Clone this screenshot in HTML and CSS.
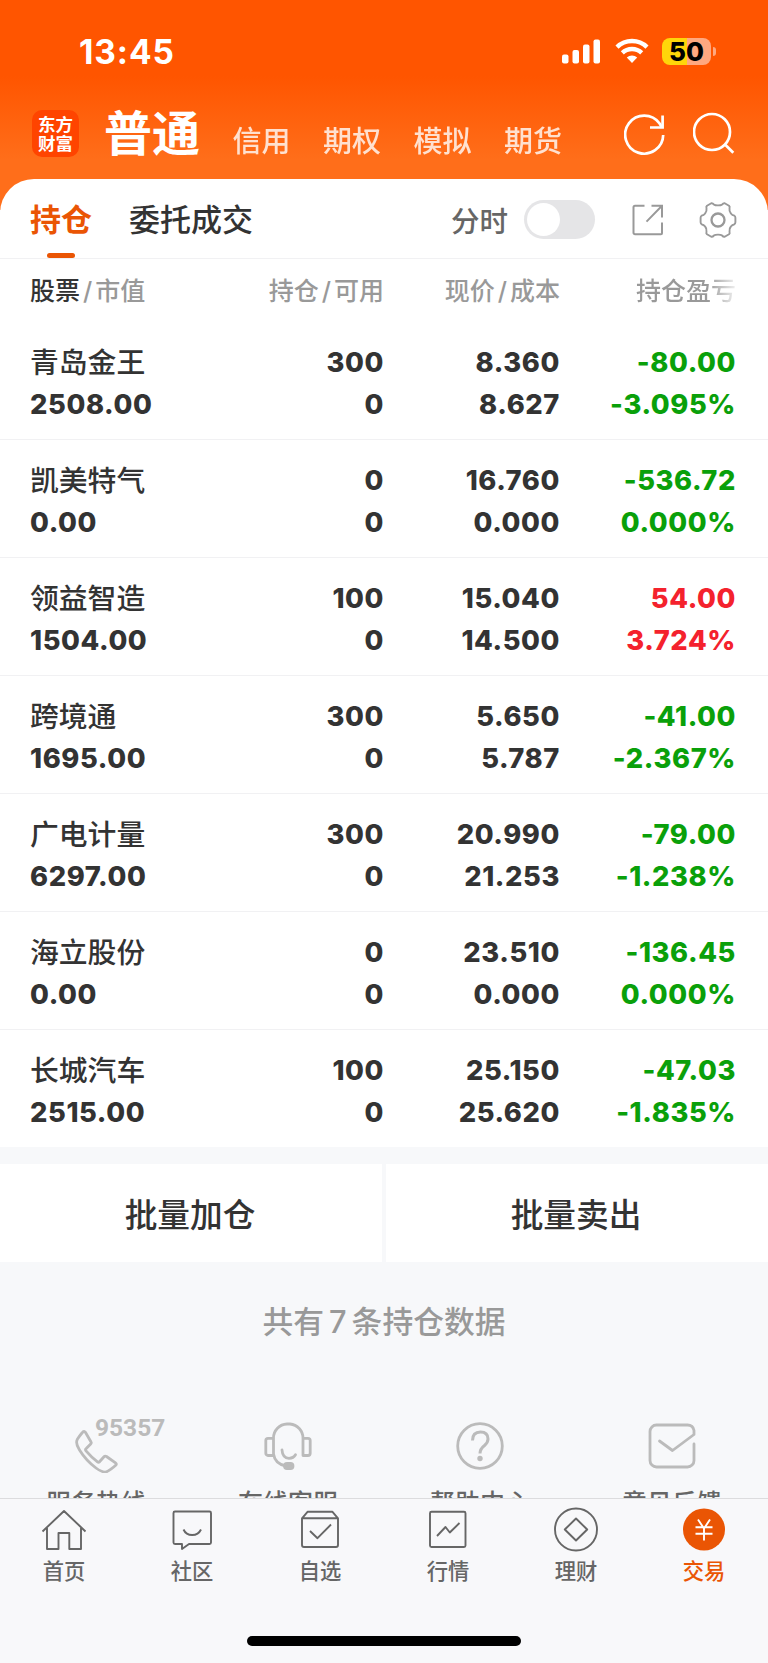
FILE: index.html
```html
<!DOCTYPE html>
<html lang="zh-CN">
<head>
    <meta charset="UTF-8">
    <meta name="viewport" content="width=device-width, initial-scale=1.0">
    <title>持仓</title>
    <link rel="stylesheet" href="styles.css">
</head>
<body>
    <div class="screen">
        <header class="header">
            <div class="status-bar">
                <span class="time">13:45</span>
                <div class="status-icons">
                    <svg class="signal" width="39" height="25" viewBox="0 0 39 25" fill="#fff">
                        <rect x="0" y="15.5" width="6.5" height="9" rx="2"/>
                        <rect x="10.5" y="11" width="6.5" height="13.5" rx="2"/>
                        <rect x="21" y="5.5" width="6.5" height="19" rx="2"/>
                        <rect x="31.5" y="0.5" width="6.5" height="24" rx="2"/>
                    </svg>
                    <svg class="wifi" width="34" height="26" viewBox="0 0 34 26" fill="none" stroke="#fff" stroke-width="4.4">
                        <path d="M2 9.1a21.5 21.5 0 0 1 30 0"/>
                        <path d="M7.3 14.9a14 14 0 0 1 19.4 0"/>
                        <path d="M17 25l-5.2-5.4a7.6 7.6 0 0 1 10.4 0z" fill="#fff" stroke="none"/>
                    </svg>
                    <div class="battery"><span>50</span></div>
                </div>
            </div>
            <nav class="accounts">
                <div class="logo"><span>东方</span><span>财富</span></div>
                <span class="account active">普通</span>
                <span class="account">信用</span>
                <span class="account">期权</span>
                <span class="account">模拟</span>
                <span class="account">期货</span>
                <svg class="refresh" width="42" height="42" viewBox="0 0 42 42" fill="none" stroke="#fff" stroke-width="2.7">
                    <path d="M39.2 21A19 19 0 1 1 35.6 9.5L38 13.5"/>
                    <path d="M38.6 1.5v12H26"/>
                </svg>
                <svg class="search" width="42" height="42" viewBox="0 0 42 42" fill="none" stroke="#fff" stroke-width="2.7">
                    <circle cx="19" cy="20" r="18"/>
                    <path d="M31.5 32l8.8 8.8"/>
                </svg>
            </nav>
        </header>

        <main class="panel">
            <div class="tabs">
                <span class="tab active">持仓</span>
                <span class="tab">委托成交</span>
                <span class="switch-label">分时</span>
                <span class="switch"></span>
                <svg class="share" width="32" height="32" viewBox="0 0 32 32" fill="none" stroke="#999" stroke-width="2">
                    <path d="M12.5 1.8H3a1.5 1.5 0 0 0-1.5 1.5v25.4A1.5 1.5 0 0 0 3 30.2h26a1 1 0 0 0 1-1V18.5"/>
                    <path d="M19.5 1.8H30v11.7M30 1.8L14.5 17.6"/>
                </svg>
                <svg class="gear" width="38" height="38" viewBox="0 0 38 38" fill="none" stroke="#999" stroke-width="1.9" stroke-linejoin="round">
                    <path d="M12.3 2.2q1.5-.2 2.500 1.200q1.200 1 4.200 1t4.200-1q1-1.400 2.500-1.200l4.300 2.500q1.100 1 .5 2.500q-.5 3.300 1.400 5.300q1.400 1.800 3.200 2q1.300.7 1.300 2.200v4.600q0 1.500-1.300 2.200q-1.800.2-3.200 2q-1.900 2-1.400 5.300q.6 1.500-.5 2.500l-4.300 2.500q-1.500.2-2.500-1.200q-1.200-1-4.200-1t-4.200 1q-1 1.400-2.500 1.200l-4.300-2.500q-1.100-1-.5-2.500q.5-3.300-1.400-5.300q-1.400-1.800-3.200-2q-1.300-.7-1.300-2.200v-4.600q0-1.500 1.300-2.200q1.800-.2 3.200-2q1.900-2 1.400-5.300q-.6-1.500.5-2.500z"/>
                    <circle cx="19" cy="19" r="6.5" stroke-width="2.3"/>
                </svg>
            </div>

            <div class="row table-head">
                <span><b>股票</b><i>/</i>市值</span>
                <span>持仓<i>/</i>可用</span>
                <span>现价<i>/</i>成本</span>
                <span class="fade">持仓盈亏</span>
            </div>

            <div class="row">
                <div class="name">青岛金王</div><div>300</div><div>8.360</div><div class="down">-80.00</div>
                <div>2508.00</div><div>0</div><div>8.627</div><div class="down">-3.095%</div>
            </div>
            <div class="row">
                <div class="name">凯美特气</div><div>0</div><div>16.760</div><div class="down">-536.72</div>
                <div>0.00</div><div>0</div><div>0.000</div><div class="down">0.000%</div>
            </div>
            <div class="row">
                <div class="name">领益智造</div><div>100</div><div>15.040</div><div class="up">54.00</div>
                <div>1504.00</div><div>0</div><div>14.500</div><div class="up">3.724%</div>
            </div>
            <div class="row">
                <div class="name">跨境通</div><div>300</div><div>5.650</div><div class="down">-41.00</div>
                <div>1695.00</div><div>0</div><div>5.787</div><div class="down">-2.367%</div>
            </div>
            <div class="row">
                <div class="name">广电计量</div><div>300</div><div>20.990</div><div class="down">-79.00</div>
                <div>6297.00</div><div>0</div><div>21.253</div><div class="down">-1.238%</div>
            </div>
            <div class="row">
                <div class="name">海立股份</div><div>0</div><div>23.510</div><div class="down">-136.45</div>
                <div>0.00</div><div>0</div><div>0.000</div><div class="down">0.000%</div>
            </div>
            <div class="row">
                <div class="name">长城汽车</div><div>100</div><div>25.150</div><div class="down">-47.03</div>
                <div>2515.00</div><div>0</div><div>25.620</div><div class="down">-1.835%</div>
            </div>
        </main>

        <div class="batch">
            <div class="batch-btn">批量加仓</div>
            <div class="batch-btn">批量卖出</div>
        </div>
        <p class="summary">共有<span>7</span>条持仓数据</p>

        <div class="services">
            <div class="service">
                <div class="hotline">
                    <svg width="44" height="44" viewBox="0 0 44 44" fill="none" stroke="#bbb" stroke-width="2.8" stroke-linejoin="round">
                        <path d="M9.5 2.5q-1.500 1-6 7.500q-2.500 4 2 11q6.500 10.500 16.500 18q6 4.500 10 4q4-1.500 10-7q.8-1.200-.5-2.200l-9-6.300q-1.500-.8-2.500.3l-4.500 5q-1 .8-2 0q-6-4.500-11.500-11q-1-1.200.2-2.300l4.500-4.500q1-1 .2-2.200l-5.500-9.500q-.9-1.300-1.900-.8z"/>
                    </svg>
                    <span>95357</span>
                </div>
                <div class="service-name">服务热线</div>
            </div>
            <div class="service">
                <svg width="48" height="48" viewBox="0 0 48 48" fill="none" stroke="#bbb" stroke-width="2.8" stroke-linejoin="round">
                    <path d="M9.5 32V16A14 14 0 0 1 23 2h3a14 14 0 0 1 13 14v17.5h5a2.2 2.2 0 0 0 2.2-2.2V18.5a2.2 2.2 0 0 0-2.2-2.2h-5"/>
                    <path d="M9.5 33.5H4a2.2 2.2 0 0 1-2.2-2.2V18.5A2.2 2.2 0 0 1 4 16.3h5.5M9.5 32q1.5 10 12.5 12"/>
                    <path d="M18 28q.5 8 7 8.3q4.5 0 6.5-3.5" stroke-linecap="round"/>
                    <rect x="20.5" y="41.5" width="8.5" height="5" rx="2.5" fill="#bbb"/>
                </svg>
                <div class="service-name">在线客服</div>
            </div>
            <div class="service">
                <svg width="48" height="48" viewBox="0 0 48 48" fill="none" stroke="#bbb" stroke-width="2.8">
                    <circle cx="24" cy="24" r="22.3"/>
                    <path d="M16.5 18.5q0-8.5 8-8.5q7.5 0 7.5 7q0 3.5-3.5 6.5q-4.5 3.5-4.5 8" stroke-width="3"/>
                    <circle cx="24" cy="36.5" r="2.7" fill="#bbb" stroke="none"/>
                </svg>
                <div class="service-name">帮助中心</div>
            </div>
            <div class="service">
                <svg width="48" height="48" viewBox="0 0 48 48" fill="none" stroke="#bbb" stroke-width="2.8" stroke-linecap="round" stroke-linejoin="round">
                    <path d="M46 22v16.5a6.5 6.5 0 0 1-6.5 6.5h-31A6.5 6.5 0 0 1 2 38.500v-29A6.500 6.500 0 0 1 8.500 3h31q5.500 0 6.500 5.500v4L24.500 28.500L11.500 19"/>
                </svg>
                <div class="service-name">意见反馈</div>
            </div>
        </div>

        <footer class="tabbar">
            <div class="tab-item">
                <svg width="46" height="46" viewBox="0 0 46 46" fill="none" stroke="#666" stroke-width="1.9" stroke-linejoin="round">
                    <path d="M1.5 24.5L23 4l21.5 20.5M6 21v21h11.5V26h10.8v16H40V21"/>
                </svg>
                <span>首页</span>
            </div>
            <div class="tab-item">
                <svg width="46" height="46" viewBox="0 0 46 46" fill="none" stroke="#666" stroke-width="1.9" stroke-linejoin="round">
                    <path d="M6 4.5h34.5a1.5 1.5 0 0 1 1.5 1.5v29.5a1.5 1.5 0 0 1-1.5 1.5H20l-7 5V37H6a1.5 1.5 0 0 1-1.5-1.5V6A1.5 1.5 0 0 1 6 4.5z"/>
                    <path d="M14.5 22.5q2.5 5.5 8.7 5.5t8.8-5.5"/>
                </svg>
                <span>社区</span>
            </div>
            <div class="tab-item">
                <svg width="46" height="46" viewBox="0 0 46 46" fill="none" stroke="#666" stroke-width="1.9" stroke-linejoin="round">
                    <path d="M5 11.3h36v26.7a2 2 0 0 1-2 2H7a2 2 0 0 1-2-2zM5 11.3l5.5-6.5h25L41 11.3"/>
                    <path d="M13 24l7.5 7.2L34 17.5"/>
                </svg>
                <span>自选</span>
            </div>
            <div class="tab-item">
                <svg width="46" height="46" viewBox="0 0 46 46" fill="none" stroke="#666" stroke-width="1.9" stroke-linejoin="round">
                    <rect x="5" y="4.8" width="35.5" height="35.2" rx="1.5"/>
                    <path d="M12 29l8.5-9l4.3 5.5l9.7-9.5"/>
                </svg>
                <span>行情</span>
            </div>
            <div class="tab-item">
                <svg width="46" height="46" viewBox="0 0 46 46" fill="none" stroke="#666" stroke-width="1.9" stroke-linejoin="round">
                    <circle cx="23" cy="22.5" r="21"/>
                    <path d="M23 11.5l11.2 11L23 33.5l-11.2-11z"/>
                </svg>
                <span>理财</span>
            </div>
            <div class="tab-item active">
                <svg width="46" height="46" viewBox="0 0 46 46" fill="none" stroke="#fff" stroke-width="1.9">
                    <circle cx="23" cy="22.5" r="21" fill="#ea5504" stroke="none"/>
                    <path d="M17 12.5l6 9l6-9M23 21.5v12M14.5 20.3h17M14.5 26.8h17"/>
                </svg>
                <span>交易</span>
            </div>
        </footer>
        <div class="home-indicator"></div>
    </div>
</body>
</html>
```
FILE: styles.css
```css
:root {
    --accent: #ea5504;
    --text: #333;
    --muted: #999;
    --page-bg: #f7f8fa;
    --line: #f1f1f3;
    --up: #f4222d;
    --down: #0aa00a;
}

* {
    box-sizing: border-box;
}

body {
    margin: 0;
    font-family: Inter, "Noto Sans CJK SC", sans-serif;
    color: var(--text);
    background-color: var(--page-bg);
}

svg {
    display: block;
    flex: none;
}

.screen {
    position: relative;
    width: 768px;
    height: 1663px;
    overflow: hidden;
    display: flex;
    flex-direction: column;
}

/* Header */
.header {
    flex: none;
    height: 210px;
    background: linear-gradient(#ff5500 0, #ff5500 76px, #ff6e1a 160px);
}

.status-bar {
    height: 102px;
    padding: 0 57px 0 79px;
    display: flex;
    justify-content: space-between;
    align-items: center;
}

.time {
    padding-top: 1px;
    color: #fff;
    font-size: 33.5px;
    font-weight: 700;
    letter-spacing: 0.9px;
}

.status-icons {
    display: flex;
    align-items: center;
}

.wifi {
    margin: 0 13px 0 14px;
}

.battery {
    position: relative;
    width: 49px;
    height: 27px;
    border-radius: 8px;
    background: linear-gradient(90deg, #ffd60a 51%, #ffa880 51%);
    color: #000;
    font-size: 26px;
    font-weight: 800;
    line-height: 27px;
    text-align: center;
}

.battery::after {
    content: "";
    position: absolute;
    right: -5px;
    top: 9px;
    width: 3px;
    height: 9px;
    border-radius: 0 4px 4px 0;
    background-color: #ffa880;
}

.accounts {
    height: 78px;
    padding: 0 33px 0 32px;
    display: flex;
    align-items: flex-start;
    color: #fff;
}

.logo {
    width: 47px;
    height: 47px;
    margin: 8px 25px 0 0;
    padding-top: 5px;
    border-radius: 10px;
    background-color: #ff4400;
    font-size: 17.5px;
    font-weight: 700;
    line-height: 19px;
    text-align: center;
}

.logo span {
    display: block;
}

.account {
    margin: 19px 0 0 32.5px;
    font-size: 29px;
    font-weight: 500;
    line-height: 42px;
    opacity: 0.8;
}

.account.active {
    margin: 1px 0 0;
    font-size: 48px;
    font-weight: 700;
    line-height: 62px;
    opacity: 1;
}

.refresh {
    margin: 12px 0 0 auto;
}

.search {
    margin: 10px 0 0 27px;
}

/* Positions panel */
.panel {
    flex: none;
    margin-top: -31px;
    border-radius: 34px 34px 0 0;
    background-color: #fff;
}

.tabs {
    height: 80px;
    padding: 2px 31px 0 30px;
    display: flex;
    align-items: center;
    border-bottom: 1px solid var(--line);
}

.tab {
    position: relative;
    margin-right: 37px;
    font-size: 31px;
    font-weight: 500;
    line-height: 78px;
}

.tab.active {
    color: var(--accent);
    font-weight: 700;
}

.tab.active::after {
    content: "";
    position: absolute;
    left: 17px;
    bottom: 1px;
    width: 28px;
    height: 5px;
    border-radius: 3px;
    background-color: var(--accent);
}

.switch-label {
    margin-left: auto;
    color: #666;
    font-size: 28.5px;
    font-weight: 500;
}

.switch {
    width: 71px;
    height: 39px;
    margin-left: 16px;
    padding: 3px;
    border-radius: 20px;
    background-color: #e5e5e7;
}

.switch::before {
    content: "";
    display: block;
    width: 33px;
    height: 33px;
    border-radius: 50%;
    background-color: #fff;
}

.share {
    margin-left: 37px;
}

.gear {
    margin-left: 35px;
}

.row {
    height: 118px;
    padding: 20px 32px 0 30px;
    display: grid;
    grid-template-columns: 178px 176px 176px 176px;
    grid-auto-rows: 42px;
    border-bottom: 1px solid var(--line);
    font-size: 27.3px;
    font-weight: 800;
    letter-spacing: 0.6px;
    line-height: 42px;
    text-align: right;
}

.row > :nth-child(4n + 1) {
    text-align: left;
}

.row .name {
    font-size: 28.8px;
    font-weight: 500;
    letter-spacing: 0;
    white-space: nowrap;
}

.row:last-child {
    height: 117px;
    border-bottom: none;
}

.table-head {
    height: 63px;
    padding-top: 11px;
    border-bottom: none;
    color: var(--muted);
    font-size: 25px;
    font-weight: 500;
    letter-spacing: 0;
}

.table-head b {
    color: var(--text);
    font-weight: 500;
}

.table-head i {
    margin: 0 3px;
    font-style: normal;
}

.fade {
    color: transparent;
    background: linear-gradient(90deg, var(--muted) 84%, #f0f0f0 100%);
    -webkit-background-clip: text;
    background-clip: text;
}

.up {
    color: var(--up);
}

.down {
    color: var(--down);
}

/* Batch actions */
.batch {
    flex: none;
    display: flex;
    gap: 4px;
    margin-top: 17px;
}

.batch-btn {
    flex: 1;
    height: 98px;
    padding: 2px 2px 0 0;
    background-color: #fff;
    font-size: 32.7px;
    font-weight: 500;
    line-height: 98px;
    text-align: center;
}

.summary {
    margin: 38px 0 1px;
    color: var(--muted);
    font-size: 30.8px;
    font-weight: 500;
    line-height: 44px;
    text-align: center;
}

.summary span {
    margin: 0 5px;
}

/* Service shortcuts, cut off by the tab bar */
.services {
    flex: none;
    display: flex;
    height: 153px;
    padding-top: 77px;
    overflow: hidden;
}

.service {
    flex: 1;
    display: flex;
    flex-direction: column;
    align-items: center;
}

.hotline {
    position: relative;
    height: 48px;
    padding-top: 7px;
}

.hotline span {
    position: absolute;
    left: 21px;
    top: -7px;
    color: #bbb;
    font-family: Roboto, sans-serif;
    font-size: 24.5px;
    font-weight: 700;
    line-height: 26px;
}

.service-name {
    margin-top: 15px;
    color: #666;
    font-size: 25px;
    font-weight: 500;
    line-height: 36px;
}

/* Bottom tab bar */
.tabbar {
    position: absolute;
    left: 0;
    right: 0;
    top: 1498px;
    height: 165px;
    padding-top: 8px;
    display: flex;
    border-top: 1px solid #dcdcde;
    background-color: #f8f8fa;
}

.tab-item {
    flex: 1;
    display: flex;
    flex-direction: column;
    align-items: center;
    color: #666;
    font-size: 21.3px;
    font-weight: 500;
    line-height: 36px;
}

.tab-item.active {
    color: var(--accent);
}

.home-indicator {
    position: absolute;
    left: 247px;
    top: 1636px;
    width: 274px;
    height: 10px;
    border-radius: 5px;
    background-color: #000;
}
```
